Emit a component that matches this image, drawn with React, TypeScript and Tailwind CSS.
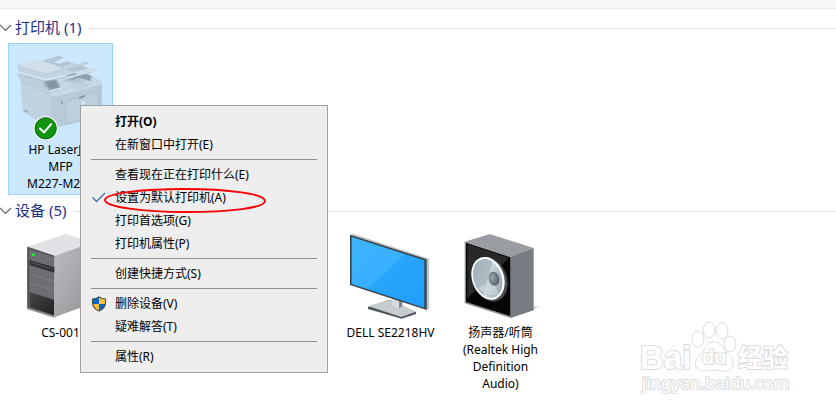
import React from 'react';

interface Device {
  id: string;
  label?: string[];
  icon?: React.ReactNode;
  selected?: boolean;
}

interface MenuEntry {
  label: string;
  bold?: boolean;
  checked?: boolean;
  circled?: boolean;
  shield?: boolean;
}

const PrinterIcon: React.FC = () => (
  <svg className="w-full h-24" viewBox="12 12 309 288" fill="none">
    {/* Body */}
    <path d="M46 116L138 160V270L52 212Z" fill="#c1d2e1" />
    <path d="M138 166L291 131V219L245 240L158 262L138 268Z" fill="#b8cad9" />
    <path d="M48 121L135 166L290 129" stroke="#a8bac9" strokeWidth="2" />
    <path d="M58 209l12 5v4l-12-4Z" fill="#8fa3b3" />
    {/* Control deck and output tray */}
    <path d="M38 97L123 119L165 151L138 168L40 113Z" fill="#bdcedc" />
    <path d="M150 108L212 84L290 122V133L151 171L134 162L166 149Z" fill="#c6d7e4" />
    <path d="M137 168L290 129" stroke="#d3e1eb" strokeWidth="2" />
    <path d="M174 124L227 99L263 112L222 129L249 136" fill="#b5c7d5" stroke="#aabdcb" strokeWidth="2" />
    <path d="M190 119L238 101L257 106V124L224 113L203 119Z" fill="#8c9fae" />
    <path d="M192 139L222 128L250 137L216 150Z" fill="#c0d2df" stroke="#afc1cf" strokeWidth="1" />
    {/* Document feeder */}
    <path d="M38 78Q38 73 44 71L92 61L102 61L176 80L178 92L145 116L123 119L40 94Z" fill="#c2d3e0" />
    <path d="M43 73L91 61L103 61L172 80Q178 83 173 87L133 99Q126 101 119 99L42 78Z" fill="#d0dfea" />
    <path d="M39 80L124 103L174 88" stroke="#b6c8d6" strokeWidth="2" />
    <path d="M37 97L123 119L181 106" stroke="#dbe7f0" strokeWidth="4" />
    <path d="M39 102L122 125L182 111" stroke="#a8bbc9" strokeWidth="2" />
    {/* Feeder trays */}
    <path d="M118 62L160 49L174 53L145 67L159 73L184 65L197 69L169 81Z" fill="#b5c6d4" stroke="#a9bbca" strokeWidth="2" />
    <path d="M168 81L201 70L221 76L238 65L250 69L218 84L258 89L259 98L186 113L177 105Z" fill="#c3d4e1" stroke="#aebfcd" strokeWidth="2" />
    <path d="M184 86L226 77L252 84L201 96Z" fill="#b3c5d3" />
    <path d="M175 104L272 81V92L190 115Z" fill="#cddce7" />
    <path d="M187 107L214 101" stroke="#8299aa" strokeWidth="4" />
    {/* Touch panel */}
    <path d="M116 124L155 116L169 143L132 153L116 136Z" fill="#a3b6c4" />
    <path d="M120 125L151 120L163 142L135 148Z" fill="#8496a4" />
    <path d="M132 154L171 143" stroke="#e0eaf1" strokeWidth="3" />
    {/* Front door */}
    <path d="M181 184L280 154V226L183 252Z" fill="#bdcfde" stroke="#a9bbc9" strokeWidth="2" />
    <path d="M222 171L240 165V171L223 177Z" fill="#8396a5" />
    <circle cx="235" cy="188" r="6" fill="#d8e6f0" />
    <path d="M170 184v9" stroke="#8396a5" strokeWidth="4" />
    {/* Default printer badge */}
    <circle cx="122" cy="265" r="36" fill="#fff" />
    <circle cx="122" cy="265" r="32" fill="#119411" stroke="#0b680b" strokeWidth="3" />
    <path d="M103 264L117 277L140 251" stroke="#fff" strokeWidth="6" />
  </svg>
);

const ServerIcon: React.FC = () => (
  <svg className="w-full h-24" viewBox="27 21 309 288" fill="none">
    <defs>
      <linearGradient id="serverSide" x1="0" y1="0" x2="1" y2="1">
        <stop stopColor="#bcbdc0" />
        <stop offset="1" stopColor="#929397" />
      </linearGradient>
      <linearGradient id="serverFoot" x1="0" y1="0" x2="1" y2="1">
        <stop stopColor="#454648" />
        <stop offset="1" stopColor="#202123" />
      </linearGradient>
    </defs>
    <path d="M82 80L197 42L278 67L163 108Z" fill="#e0e2e6" />
    <path d="M163 108L278 67V250L163 292Z" fill="url(#serverSide)" />
    <path d="M82 80L163 108V292L82 265Z" fill="#6d6e72" />
    <path d="M82 80L163 107V112L88 87V267L82 265Z" fill="#525356" />
    <path d="M89 120L163 142V158L89 135Z" fill="#303134" />
    <path d="M93 127L158 147" stroke="#57585b" strokeWidth="3" />
    <path d="M89 162L163 185M89 188L163 212" stroke="#a5a6aa" strokeWidth="1" />
    <path d="M89 216L162 239V286L89 262Z" fill="url(#serverFoot)" />
    <path d="M82 263L163 288V293L82 268Z" fill="#8f9093" />
    <circle cx="100" cy="104" r="5" fill="#25e33c" />
  </svg>
);

const MonitorIcon: React.FC = () => (
  <svg className="w-full h-24" viewBox="-3 6 309 288" fill="none">
    <defs>
      <linearGradient id="screenFill" x1="0" y1="0" x2="1" y2="1">
        <stop stopColor="#2facfd" />
        <stop offset="1" stopColor="#209ffc" />
      </linearGradient>
    </defs>
    <path d="M84 246L148 224L228 261V267L185 281L84 252Z" fill="#4f565a" />
    <path d="M84 243L148 225L228 260L184 276Z" fill="#c5cdd1" />
    <path d="M156 218L186 227V244L176 249L156 241Z" fill="#d8dcde" />
    <path d="M177 228L187 228V244L177 249Z" fill="#7f8588" />
    <path d="M31 30L38 26L267 101V252L259 255Z" fill="#bcc3c8" />
    <path d="M30 29L260 103V255L30 180Z" fill="#39444b" />
    <path d="M35 36L253 106V248L35 177Z" fill="url(#screenFill)" />
    <path d="M35 36L191 86Q145 139 81 192L35 177Z" fill="#58c2fc" opacity=".35" />
  </svg>
);

const SpeakerIcon: React.FC = () => (
  <svg className="w-full h-24" viewBox="-3 6 309 288" fill="none">
    <defs>
      <linearGradient id="speakerCone" x1="0" y1="0" x2="1" y2="1">
        <stop stopColor="#a2afb7" />
        <stop offset=".5" stopColor="#afbcc4" />
        <stop offset=".52" stopColor="#cbd8df" />
        <stop offset="1" stopColor="#84929a" />
      </linearGradient>
      <radialGradient id="speakerCap" cx=".35" cy=".4" r=".7">
        <stop stopColor="#9daab2" />
        <stop offset="1" stopColor="#4e5a62" />
      </radialGradient>
      <linearGradient id="speakerShadow" x1="0" y1="0" x2="1" y2="0">
        <stop stopColor="#d0d0d0" />
        <stop offset="1" stopColor="#fff" />
      </linearGradient>
    </defs>
    <path d="M248 244L273 243L248 257Z" fill="url(#speakerShadow)" />
    <path d="M44 50L119 27L251 69L182 96Z" fill="#9a9ea3" />
    <path d="M182 95L251 69V256L182 279Z" fill="#777b82" />
    <path d="M44 50L183 95V279L44 235Z" fill="#8d9196" />
    <path d="M48 53L181 97V273L48 231Z" fill="#050505" />
    <path d="M52 57L176 98Q150 130 52 219Z" fill="#292929" />
    <ellipse cx="121" cy="164" rx="50" ry="67" transform="rotate(-19 121 164)" fill="#4b4e50" />
    <ellipse cx="114" cy="160" rx="48" ry="66" transform="rotate(-19 114 160)" fill="#fbfcfc" />
    <ellipse cx="113" cy="160" rx="42" ry="60" transform="rotate(-19 113 160)" fill="url(#speakerCone)" />
    <path d="M83 190L130 166L145 208Q115 218 96 198Z" fill="#ccd8df" opacity=".7" />
    <ellipse cx="132" cy="161" rx="16" ry="21" transform="rotate(-14 132 161)" fill="url(#speakerCap)" />
  </svg>
);

const ShieldIcon: React.FC = () => (
  <svg width="16" height="16" viewBox="0 0 16 16" fill="none">
    <path d="M8 1Q5 3 1.500 3V8H8Z" fill="#0867c5" />
    <path d="M8 1Q11 3 14.500 3V8H8Z" fill="#ffc13b" />
    <path d="M1.500 8H8V15Q2.500 13 1.500 8Z" fill="#ffc13b" />
    <path d="M8 8H14.500Q13.500 13 8 15Z" fill="#0867c5" />
    <path d="M8 1Q5 3 1.500 3V7Q2 12.500 8 15Q14 12.500 14.500 7V3Q11 3 8 1Z" stroke="#4b5052" strokeWidth="1.200" />
  </svg>
);

const PRINTERS: Device[] = [
  { id: 'hp', label: ['HP LaserJet', 'MFP', 'M227-M231'], icon: <PrinterIcon />, selected: true },
];

const DEVICES: Device[] = [
  { id: 'server', label: ['CS-001'], icon: <ServerIcon /> },
  { id: 'slot-2' },
  { id: 'slot-3' },
  { id: 'monitor', label: ['DELL SE2218HV'], icon: <MonitorIcon /> },
  { id: 'speaker', label: ['扬声器/听筒', '(Realtek High', 'Definition', 'Audio)'], icon: <SpeakerIcon /> },
];

// Groups are divided by separator lines
const MENU_GROUPS: MenuEntry[][] = [
  [{ label: '打开(O)', bold: true }, { label: '在新窗口中打开(E)' }],
  [
    { label: '查看现在正在打印什么(E)' },
    { label: '设置为默认打印机(A)', checked: true, circled: true },
    { label: '打印首选项(G)' },
    { label: '打印机属性(P)' },
  ],
  [{ label: '创建快捷方式(S)' }],
  [{ label: '删除设备(V)', shield: true }, { label: '疑难解答(T)' }],
  [{ label: '属性(R)' }],
];

const DeviceTile: React.FC<{ device: Device }> = ({ device }) => (
  <button
    className={`w-[105px] min-h-[152px] shrink-0 flex flex-col items-center border text-xs leading-[17px] text-black
      ${device.selected ? 'bg-[#cce8ff] border-[#99d1ff]' : 'border-transparent'}`}
  >
    <span className="block w-full h-24 mb-px">{device.icon}</span>
    {device.label?.map((line) => (
      <span key={line} className="block whitespace-nowrap">{line}</span>
    ))}
  </button>
);

const DeviceGroup: React.FC<{ title: string; devices: Device[] }> = ({ title, devices }) => (
  <section className="pb-[7px]">
    <h2 className="flex items-center h-[18px] mb-[6px] text-[15px] leading-4 text-[#1e3287]">
      <svg width="12" height="8" viewBox="0 0 12 8" fill="none" className="mr-[3px]">
        <path d="M0 1L5.500 6.500L11 1" stroke="#666" strokeWidth="1.200" />
      </svg>
      <span className="pb-0.5">{title}</span>
      <span className="flex-1 h-px ml-2 bg-[#e2e2e2]" />
    </h2>
    <div className="flex gap-[5px] pl-2">
      {devices.map((device) => (
        <DeviceTile key={device.id} device={device} />
      ))}
    </div>
  </section>
);

const MenuItem: React.FC<{ entry: MenuEntry }> = ({ entry }) => (
  <button
    role="menuitem"
    className={`relative flex items-center w-full h-[23px] pl-[10px] text-xs text-left text-black ${entry.bold ? 'font-bold' : ''}`}
  >
    <span className="w-6 shrink-0">
      {entry.shield && <ShieldIcon />}
      {entry.checked && (
        <svg width="16" height="16" viewBox="0 0 16 16" fill="none">
          <path d="M1.500 7.500L5.500 11.500L14 3" stroke="#3d6fa5" strokeWidth="1.300" />
        </svg>
      )}
    </span>
    {entry.label}
    {entry.circled && (
      <svg className="absolute left-[22px] top-0 w-[164px] h-7" viewBox="0 0 164 28" fill="none">
        <path d="M2 14C2 7 42 3 81 3C126 3 162 8 162 15C162 22 127 26 82 26C41 26 2 21 2 14Z" stroke="#f80000" strokeWidth="2" />
      </svg>
    )}
  </button>
);

const ContextMenu: React.FC = () => (
  <div role="menu" className="absolute left-20 top-[105px] w-[248px] py-1 bg-[#eee] border border-[#a0a0a0]">
    {MENU_GROUPS.map((group, index) => (
      <React.Fragment key={index}>
        {index > 0 && <hr className="mx-[10px] my-[3px] border-t border-[#919191]" />}
        {group.map((entry) => (
          <MenuItem key={entry.label} entry={entry} />
        ))}
      </React.Fragment>
    ))}
  </div>
);

const Watermark: React.FC = () => (
  <svg className="absolute right-10 bottom-[14px] w-[160px] h-[80px]" viewBox="0 0 160 80">
    <g fill="#fff" stroke="#dcdcdc" strokeWidth="1">
      <ellipse cx="62" cy="21" rx="6" ry="8" />
      <ellipse cx="73" cy="12" rx="6" ry="8" />
      <ellipse cx="86" cy="13" rx="6" ry="8" />
      <ellipse cx="94" cy="26" rx="6" ry="8" />
      <path d="M78 24C86 24 86 30 92 36C100 42 99 53 88 53C82 53 78 51 68 53C58 54 57 42 64 37C70 31 70 24 78 24Z" />
    </g>
    <g fill="#fff" stroke="#dcdcdc" strokeWidth="2" paintOrder="stroke" strokeLinejoin="round">
      <text x="4" y="51" fontSize="33" fontWeight="700" fontFamily="Liberation Sans">Bai</text>
      <text x="66" y="46" fontSize="20" fontWeight="700" fontFamily="Liberation Sans">du</text>
      <text x="102" y="49" fontSize="25" fontWeight="700" fontFamily="Noto Sans CJK SC">经验</text>
      <text x="6" y="71" fontSize="17" fontFamily="Noto Sans">jingyan.baidu.com</text>
    </g>
  </svg>
);

const App: React.FC = () => (
  <main className="relative min-h-screen overflow-hidden bg-white font-['Noto_Sans','Noto_Sans_CJK_SC',sans-serif]">
    <div className="h-[9px] mb-[10px] bg-[#f5f6f7] border-b border-[#e8e9ea]" />
    <DeviceGroup title="打印机 (1)" devices={PRINTERS} />
    <DeviceGroup title="设备 (5)" devices={DEVICES} />
    <ContextMenu />
    <Watermark />
  </main>
);

export default App;
